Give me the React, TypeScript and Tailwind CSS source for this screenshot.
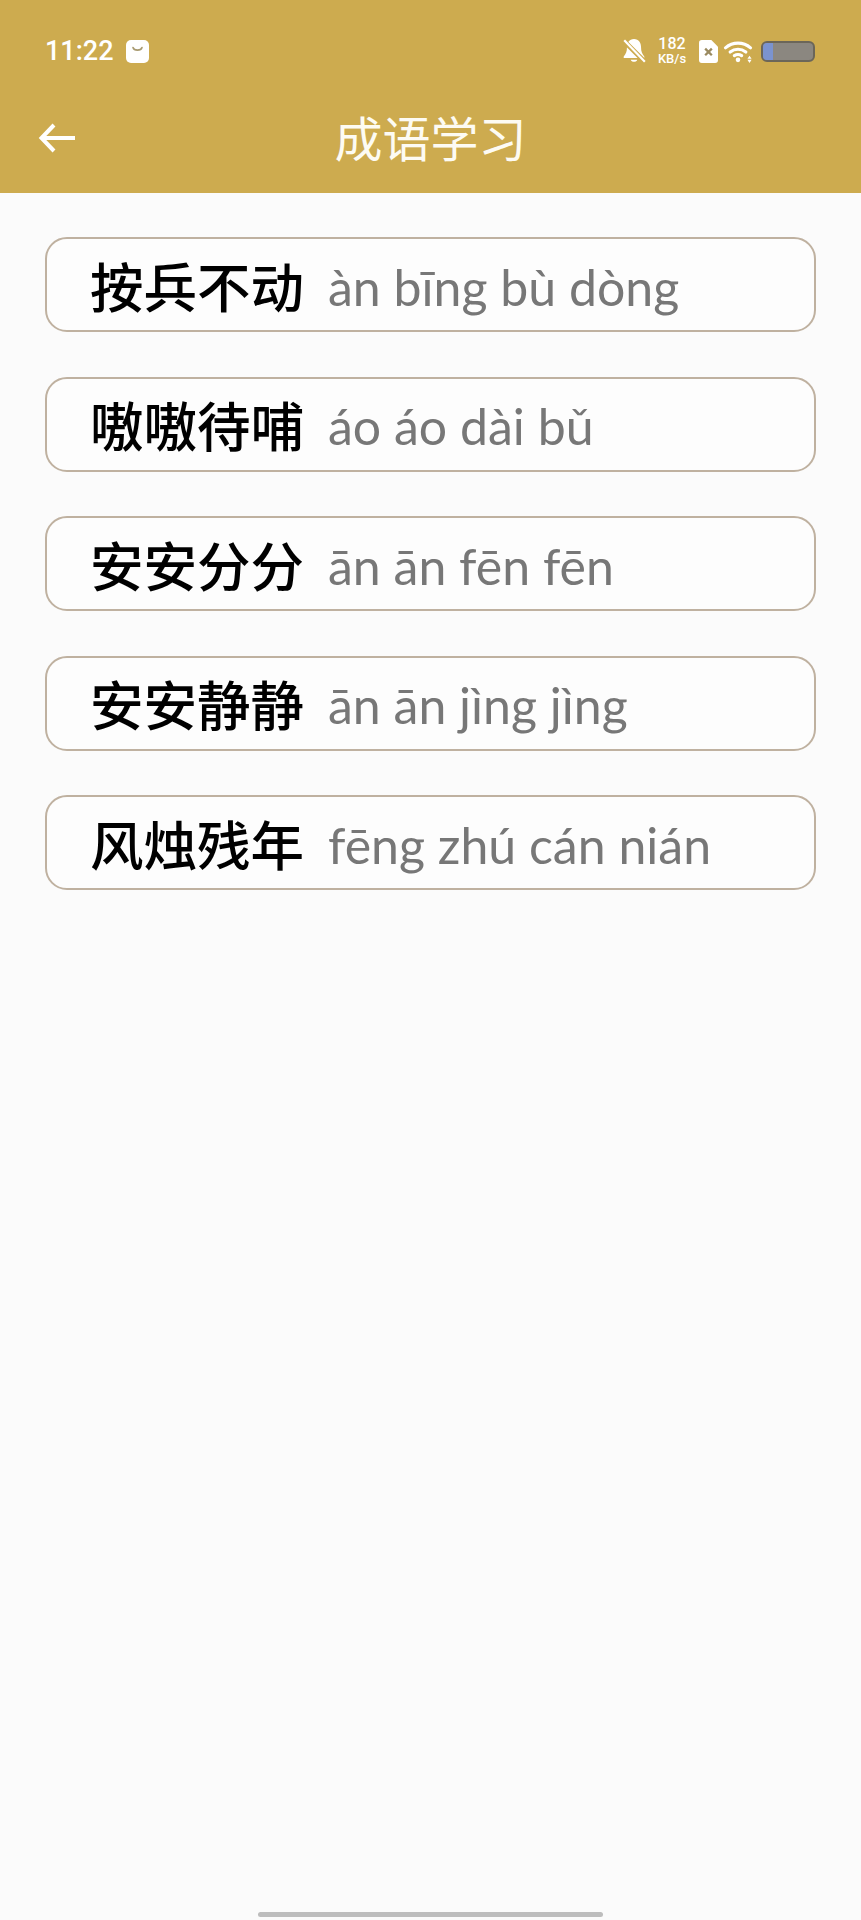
import React from 'react';

const IDIOMS = [
  { word: '按兵不动', pinyin: 'àn bīng bù dòng' },
  { word: '嗷嗷待哺', pinyin: 'áo áo dài bǔ' },
  { word: '安安分分', pinyin: 'ān ān fēn fēn' },
  { word: '安安静静', pinyin: 'ān ān jìng jìng' },
  { word: '风烛残年', pinyin: 'fēng zhú cán nián' },
];

function StatusBar() {
  return (
    <div className="h-[100px] pl-[45px] pr-[46px] pt-[31px] flex items-start justify-between text-white">
      <div className="h-[40px] flex items-center gap-[12px]">
        <span className="text-[27px] font-medium leading-none font-['Roboto',sans-serif]">11:22</span>
        <svg width="23" height="23" viewBox="0 0 23 23">
          <rect width="23" height="23" rx="5" fill="#fff" />
          <path d="M7 7.500c1 3.500 8 3.500 9 0" fill="none" stroke="#a89a70" strokeWidth="1.600" strokeLinecap="round" />
        </svg>
      </div>
      <div className="h-[40px] flex items-center">
        <svg width="24" height="26" viewBox="0 0 22 24" className="mr-[10px]">
          <path d="M11 1c-4.500 0-6.500 3.500-6.500 7.500 0 4-1 6-3 8.500v1.500h19V17c-2-2.500-3-4.500-3-8.500C17.500 4.500 15.500 1 11 1z" fill="#fff" />
          <path d="M8 20c.5 2.500 5.500 2.500 6 0z" fill="#fff" />
          <path d="M1 2l20 20" stroke="#cdab4f" strokeWidth="4.500" />
          <path d="M2 2l19 20" stroke="#fff" strokeWidth="2" />
        </svg>
        <div className="w-[32px] mr-[11px] flex flex-col items-center font-['Roboto',sans-serif] font-medium leading-none">
          <span className="text-[16px] leading-[16px]">182</span>
          <span className="text-[13px] leading-[14px] whitespace-nowrap">KB/s</span>
        </div>
        <svg width="19" height="23" viewBox="0 0 20 24" className="mr-[5px]">
          <path d="M3 0h10l7 7v14a3 3 0 0 1-3 3H3a3 3 0 0 1-3-3V3a3 3 0 0 1 3-3z" fill="#fff" />
          <path d="M6.500 9l7 7M13.500 9l-7 7" stroke="#9a8a60" strokeWidth="2.400" />
        </svg>
        <svg width="30" height="23" viewBox="0 0 28 22" className="mr-[8px]">
          <g fill="none" stroke="#fff" strokeWidth="3" strokeLinecap="round">
            <path d="M2 7.500c7-6 17-6 24 0" />
            <path d="M6.500 11.500c4.500-3.500 10.500-3.500 15 0" />
            <path d="M10.500 15c2.300-1.500 4.700-1.500 7 0" />
          </g>
          <circle cx="14" cy="19" r="2.200" fill="#fff" />
          <path d="M25 15l-2 3h4zM25 22l-2-3h4z" fill="#fff" />
        </svg>
        <div className="w-[54px] h-[21px] rounded-[6px] border-[2px] border-[#6b6659] bg-[#8b8780] overflow-hidden">
          <div className="w-[10px] h-full bg-[#7b93cf]" />
        </div>
      </div>
    </div>
  );
}

function Toolbar() {
  return (
    <div className="relative h-[93px] flex items-start justify-center">
      <svg width="38" height="32" viewBox="0 0 38 30" className="absolute left-[38px] top-[22px]">
        <path d="M37 15H4M16 2L3.500 15 16 28" fill="none" stroke="#fff" strokeWidth="4" />
      </svg>
      <h1 className="mt-[4px] text-[48px] leading-[64px] font-normal text-[#fdfbf3] font-['Noto_Sans_CJK_SC',sans-serif]">成语学习</h1>
    </div>
  );
}

function IdiomRow({ word, pinyin }: { word: string; pinyin: string }) {
  return (
    <div className="h-[95px] border-[2px] border-[#bfb1a0] rounded-[22px] bg-[#fdfdfd] pl-[43px] flex items-center gap-[25px]">
      <span className="w-[213px] text-[53.500px] leading-none font-medium text-black whitespace-nowrap font-['Noto_Sans_CJK_SC',sans-serif]">{word}</span>
      <span className="text-[50px] leading-none mt-[4px] text-[#777777] font-['Lato',sans-serif]">{pinyin}</span>
    </div>
  );
}

export default function App() {
  return (
    <div className="w-[861px] h-[1920px] bg-[#fbfbfb] flex flex-col overflow-hidden">
      <div className="bg-[#cdab4f]">
        <StatusBar />
        <Toolbar />
      </div>
      <div className="pt-[44px] pl-[45px] pr-[45px] flex flex-col gap-[44.500px]">
        {IDIOMS.map((item) => (
          <IdiomRow key={item.word} word={item.word} pinyin={item.pinyin} />
        ))}
      </div>
      <div className="mt-auto mb-[3px] mx-auto w-[345px] h-[5px] rounded-full bg-[#bdbdbd]" />
    </div>
  );
}
